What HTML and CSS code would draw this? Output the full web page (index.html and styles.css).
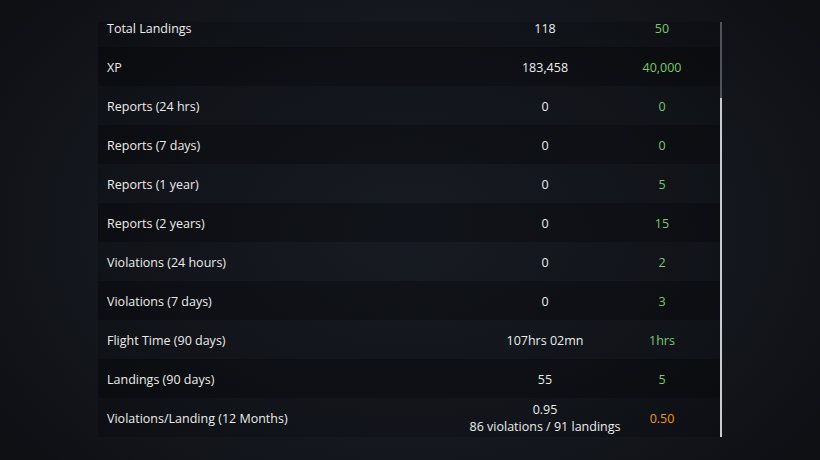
FILE: index.html
```html
<!DOCTYPE html>
<html>
<head>
<meta charset="utf-8">
<link rel="stylesheet" href="styles.css">
</head>
<body>
<div class="page">
  <div class="panel">
    <div class="viewport">
      <div class="list">
        <div class="row first"><span class="label">Total Landings</span><span class="val">118</span><span class="req ok">50</span></div>
        <div class="row"><span class="label">XP</span><span class="val">183,458</span><span class="req ok">40,000</span></div>
        <div class="row"><span class="label">Reports (24 hrs)</span><span class="val">0</span><span class="req ok">0</span></div>
        <div class="row"><span class="label">Reports (7 days)</span><span class="val">0</span><span class="req ok">0</span></div>
        <div class="row"><span class="label">Reports (1 year)</span><span class="val">0</span><span class="req ok">5</span></div>
        <div class="row"><span class="label">Reports (2 years)</span><span class="val">0</span><span class="req ok">15</span></div>
        <div class="row"><span class="label">Violations (24 hours)</span><span class="val">0</span><span class="req ok">2</span></div>
        <div class="row"><span class="label">Violations (7 days)</span><span class="val">0</span><span class="req ok">3</span></div>
        <div class="row"><span class="label">Flight Time (90 days)</span><span class="val">107hrs 02mn</span><span class="req ok">1hrs</span></div>
        <div class="row"><span class="label">Landings (90 days)</span><span class="val">55</span><span class="req ok">5</span></div>
        <div class="row"><span class="label">Violations/Landing (12 Months)</span><span class="val"><span>0.95</span><span>86 violations / 91 landings</span></span><span class="req warn">0.50</span></div>
      </div>
    </div>
    <div class="scrollbar"><div class="thumb"></div></div>
  </div>
</div>
</body>
</html>
```
FILE: styles.css
```css
html, body {
  margin: 0;
  padding: 0;
}
body {
  width: 820px;
  height: 460px;
  overflow: hidden;
  background: radial-gradient(ellipse 60% 75% at 50% 50%, #1c202a 0%, #161920 55%, #0e1014 100%);
  font-family: "Open Sans", "Noto Sans", sans-serif;
  font-size: 12.5px;
  color: #ececec;
}
.page {
  padding: 22px 0 0 98px;
}
.panel {
  display: flex;
  width: 624px;
  height: 415px;
}
.viewport {
  width: 622px;
  height: 415px;
}
.row {
  display: grid;
  grid-template-columns: 1fr 118px 116px;
  align-items: center;
  box-sizing: border-box;
  height: 39px;
  padding-top: 1px;
  background: rgba(0, 0, 0, 0.38);
}
.row:nth-child(odd) {
  background: rgba(0, 0, 0, 0.16);
}
.row.first {
  height: 25px;
  align-items: start;
  padding-top: 1px;
}
.row.first > span {
  line-height: 12px;
}
.label {
  padding-left: 9px;
  white-space: nowrap;
}
.val, .req {
  display: flex;
  flex-direction: column;
  align-items: center;
  white-space: nowrap;
  line-height: 17px;
}
.ok {
  color: #76c96f;
}
.warn {
  color: #eb9a12;
}
.scrollbar {
  width: 2px;
  height: 415px;
  display: flex;
  flex-direction: column;
  justify-content: flex-end;
  background: #50535b;
}
.thumb {
  height: 339px;
  background: #c9cacd;
}
```
